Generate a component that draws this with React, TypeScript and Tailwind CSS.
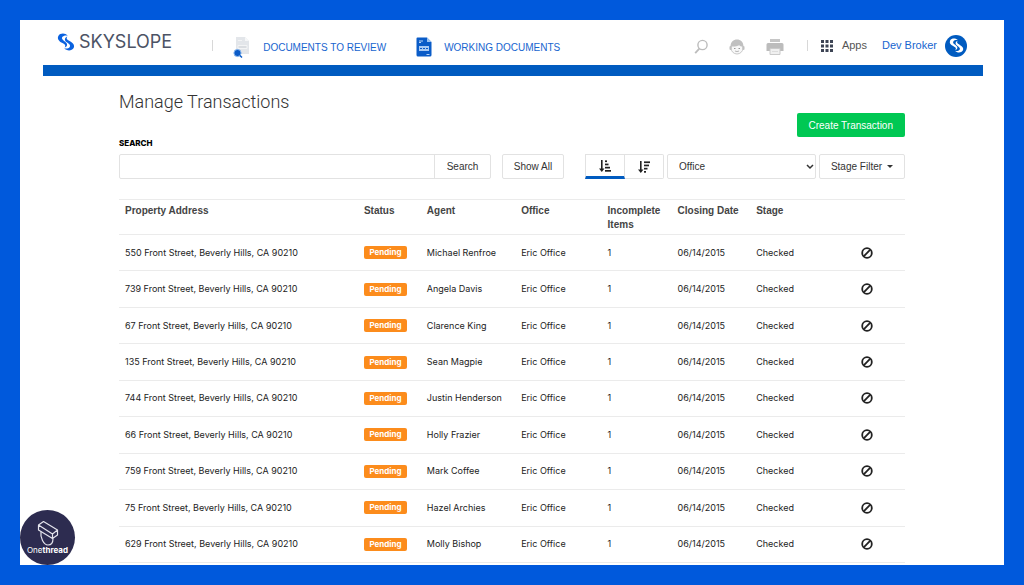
import React from 'react';

interface Transaction {
  address: string;
  agent: string;
}

const transactions: Transaction[] = [
  { address: '550 Front Street, Beverly Hills, CA 90210', agent: 'Michael Renfroe' },
  { address: '739 Front Street, Beverly Hills, CA 90210', agent: 'Angela Davis' },
  { address: '67 Front Street, Beverly Hills, CA 90210', agent: 'Clarence King' },
  { address: '135 Front Street, Beverly Hills, CA 90210', agent: 'Sean Magpie' },
  { address: '744 Front Street, Beverly Hills, CA 90210', agent: 'Justin Henderson' },
  { address: '66 Front Street, Beverly Hills, CA 90210', agent: 'Holly Frazier' },
  { address: '759 Front Street, Beverly Hills, CA 90210', agent: 'Mark Coffee' },
  { address: '75 Front Street, Beverly Hills, CA 90210', agent: 'Hazel Archies' },
  { address: '629 Front Street, Beverly Hills, CA 90210', agent: 'Molly Bishop' },
];

const Swoosh: React.FC<{ className?: string }> = ({ className }) => {
  const half =
    'M12 3C9-.3 3.500 0 1.500 3.200 0 6.200 2 8.800 5.500 10.800 8.500 12.500 10.300 13.500 8.500 16.200 12 14.500 12 11.800 9 9.600 6.500 7.800 4.600 6.400 5.800 4.500 7 2.800 9.800 2.400 12 3Z';
  return (
    <svg viewBox="0 0 20 20" fill="currentColor" className={className} aria-hidden="true">
      <path d={half} />
      <path d={half} transform="rotate(180 10 10)" />
    </svg>
  );
};

const ReviewIcon = () => (
  <svg width="18" height="22" viewBox="0 0 18 22" aria-hidden="true">
    <path d="M3 1h9l4 4v13H3z" fill="#e3e6ea" />
    <path d="M12 1v4h4z" fill="#f6f7f8" />
    <path d="M5 4.500h4M5 9.500h9v3H5z" stroke="#f3f4f5" strokeWidth="1" fill="#dadde1" />
    <circle cx="4.500" cy="17" r="3.600" fill="#0a5bc7" stroke="#8bb8ee" strokeWidth="1" />
    <path d="M7 19.500l2 2" stroke="#0a5bc7" strokeWidth="1.500" />
  </svg>
);

const WorkingIcon = () => (
  <svg width="16" height="20" viewBox="0 0 16 20" aria-hidden="true">
    <path d="M1.500.500H11L15.500 5v13a1.500 1.500 0 0 1-1.500 1.500H2A1.500 1.500 0 0 1 .5 18V1.500a1 1 0 0 1 1-1z" fill="#0a5cc8" />
    <path d="M11 .5V5h4.500z" fill="#9cc3f2" />
    <path d="M3 4h4M3 5.500h2M10.500 17.500h3" stroke="#b9d5f6" strokeWidth="1" />
    <rect x="3" y="9" width="10" height="5" fill="#a9caf3" />
    <path d="M4 11.500h8" stroke="#0a5cc8" strokeWidth="1" strokeDasharray="2 1" />
  </svg>
);

const SearchIcon = () => (
  <svg width="14" height="16" viewBox="0 0 14 16" fill="none" stroke="#bcbcbc" aria-hidden="true">
    <circle cx="8.500" cy="6" r="4.600" strokeWidth="1.400" />
    <path d="M5.300 9.600 1.200 14.200" strokeWidth="1.800" />
  </svg>
);

const SupportIcon = () => (
  <svg width="16" height="16" viewBox="0 0 16 16" aria-hidden="true">
    <circle cx="8" cy="9" r="6" fill="#f7f7f7" stroke="#c9c9c9" strokeWidth="1" />
    <path d="M1.500 7.500C1.500 3 4.500.500 8 .500s6.500 2.500 6.500 7c-2 .2-3.500-.3-4.300-1.200C8 7.600 4.500 7.800 1.500 7.500z" fill="#c0c0c0" />
    <rect x=".5" y="7" width="2" height="4" rx="1" fill="#c0c0c0" />
    <rect x="13.500" y="7" width="2" height="4" rx="1" fill="#c0c0c0" />
    <path d="M5 9.500h1.500M9.500 9.500h1.500" stroke="#999" strokeWidth="1" />
    <path d="M6 12q2 1.200 4 0" stroke="#b8b8b8" strokeWidth="1" fill="none" />
  </svg>
);

const PrinterIcon = () => (
  <svg width="18" height="16" viewBox="0 0 18 16" aria-hidden="true">
    <path d="M4 0h10v3H4z" fill="#c6c6c6" />
    <path d="M2 4h14a1.500 1.500 0 0 1 1.500 1.500V12H.500V5.500A1.500 1.500 0 0 1 2 4z" fill="#bcbcbc" />
    <path d="M4 9.500h10v6H4z" fill="#f0f0f0" stroke="#cacaca" strokeWidth="1" />
    <path d="M6 12.500h6" stroke="#dcdcdc" strokeWidth="1" />
  </svg>
);

const GridIcon = () => (
  <svg width="12" height="12" viewBox="0 0 12 12" fill="#3d4454" aria-hidden="true">
    {[0, 4.5, 9].map((y) => [0, 4.5, 9].map((x) => <rect key={`${x}-${y}`} x={x} y={y} width="3" height="3" />))}
  </svg>
);

const SortIcon: React.FC<{ bars: number[] }> = ({ bars }) => (
  <svg width="12" height="12" viewBox="0 0 12 12" fill="#222" aria-hidden="true">
    <path d="M2 0h1.600v8.500H5.500L2.800 12 0 8.500h2z" />
    {bars.map((width, i) => (
      <rect key={i} x="6" y={i * 3.2 + 0.4} width={width} height="1.700" />
    ))}
  </svg>
);

const BanIcon = () => (
  <svg width="12" height="12" viewBox="0 0 12 12" fill="none" stroke="#222" strokeWidth="1.800" aria-hidden="true">
    <circle cx="6" cy="6" r="4.800" />
    <path d="M2.700 9.300 9.300 2.700" />
  </svg>
);

const OnethreadBadge = () => (
  <div className="absolute bottom-5 left-5 flex h-[55px] w-[55px] flex-col items-center rounded-full bg-[#2d2c50] pt-[10px] text-white">
    <svg width="24" height="26" viewBox="0 0 24 26" fill="none" stroke="#e4e4ec" strokeWidth="1.200" strokeLinejoin="round" aria-hidden="true">
      <path d="M2.500 5 7.500 1.500l14 8.500-5 4zM2.500 5v5l14 8.500V14M21.500 10v5l-5 3.500" />
      <path d="M5 11.500c-.5 3 0 6 1.500 9 1.500 3 3.500 4.500 5.500 4.500 3 0 5-2.500 5-6.500" />
    </svg>
    <span className="font-[Inter,sans-serif] text-[8px] leading-[8px]">
      One<b>thread</b>
    </span>
  </div>
);

const Header = () => (
  <header className="mr-[21px] ml-[23px] flex h-[56px] items-center border-b-[11px] border-[#005bc0] pt-[6px] text-[11px]">
    <a href="#" className="flex items-center gap-1 pb-[7px] pl-[14px] text-[#4c5365]">
      <Swoosh className="h-[20px] w-[18px] text-[#0a62e0]" />
      <span className="font-[Inter,sans-serif] text-[18px] leading-5">SKYSLOPE</span>
    </a>
    <span className="ml-[40px] h-[11px] w-px bg-[#d8d8d8]" />
    <nav className="flex flex-1 items-center gap-[30px] pt-[3px] pl-[20px] text-[10px] whitespace-nowrap text-[#1765cf]">
      <a href="#" className="flex items-center gap-[12px]">
        <ReviewIcon />
        DOCUMENTS TO REVIEW
      </a>
      <a href="#" className="flex items-center gap-[12px]">
        <WorkingIcon />
        WORKING DOCUMENTS
      </a>
    </nav>
    <div className="flex items-center gap-[21px] pt-[3px]">
      <button aria-label="Search"><SearchIcon /></button>
      <button aria-label="Support"><SupportIcon /></button>
      <button aria-label="Print"><PrinterIcon /></button>
    </div>
    <span className="ml-[23px] h-[11px] w-px bg-[#d8d8d8]" />
    <button className="ml-[13px] flex items-center gap-[9px] text-[#555]">
      <GridIcon />
      Apps
    </button>
    <a href="#" className="ml-[15px] flex items-center gap-[8px] pr-[16px] text-[#1765cf]">
      Dev Broker
      <span className="flex h-[22px] w-[22px] items-center justify-center rounded-full bg-[#005bc0] text-white">
        <Swoosh className="h-[17px] w-[15px]" />
      </span>
    </a>
  </header>
);

const Toolbar = () => (
  <div>
    <label htmlFor="search" className="block font-[Inter,sans-serif] text-[8px] leading-[12px] font-extrabold text-black">
      SEARCH
    </label>
    <div className="mt-[5px] flex h-[25px] text-[10px] text-[#333]">
      <div className="flex flex-1 rounded-[2px] border border-[#e2e2e2]">
        <input id="search" type="text" className="min-w-0 flex-1 px-2 outline-none" />
        <button className="w-[56px] border-l border-[#e2e2e2]">Search</button>
      </div>
      <button className="ml-[11px] w-[62px] rounded-[2px] border border-[#e2e2e2]">Show All</button>
      <div className="ml-[21px] flex w-[79px]">
        <button aria-label="Sort ascending" className="flex flex-1 items-center justify-center border border-b-3 border-[#e2e2e2] border-b-[#005bc0]">
          <SortIcon bars={[2, 3.5, 5, 6]} />
        </button>
        <button aria-label="Sort descending" className="flex flex-1 items-center justify-center rounded-r-[2px] border border-l-0 border-[#e2e2e2]">
          <SortIcon bars={[6, 5, 3.5, 2]} />
        </button>
      </div>
      <div className="relative ml-[3px] w-[149px]">
        <select aria-label="Filter by" className="h-full w-full appearance-none rounded-[2px] border border-[#e2e2e2] bg-white px-[11px]">
          <option>Office</option>
        </select>
        <svg width="8" height="6" viewBox="0 0 8 6" fill="none" stroke="#333" strokeWidth="1.500" className="pointer-events-none absolute top-[10px] right-[2px]" aria-hidden="true">
          <path d="M1 1l3 3 3-3" />
        </svg>
      </div>
      <button className="ml-[3px] flex w-[86px] items-center justify-center gap-[5px] rounded-[2px] border border-[#e2e2e2]">
        Stage Filter
        <svg width="6" height="3" viewBox="0 0 6 3" fill="#333" aria-hidden="true">
          <path d="M0 0h6L3 3z" />
        </svg>
      </button>
    </div>
  </div>
);

const TransactionTable = () => (
  <div className="mt-[20px] flex flex-1">
    <table className="w-full table-fixed border-collapse text-left text-[#222]">
      <thead className="text-[10px] leading-[14px] text-[#444]">
        <tr className="h-[35px] border-y border-[#ebebeb] align-top [&>th]:pt-[4px] [&>th]:pl-[6px]">
          <th className="w-[30.4%]">Property Address</th>
          <th className="w-[8%]">Status</th>
          <th className="w-[12%]">Agent</th>
          <th className="w-[11%]">Office</th>
          <th className="w-[8.9%]">Incomplete Items</th>
          <th className="w-[10%]">Closing Date</th>
          <th className="w-[10%]">Stage</th>
          <th aria-label="Actions" />
        </tr>
      </thead>
      <tbody className="font-[Inter,sans-serif] text-[9px] leading-[14px]">
        {transactions.map((t) => (
          <tr key={t.address} className="border-b border-[#ebebeb] [&>td:not(:last-child)]:pl-[6px]">
            <td>{t.address}</td>
            <td>
              <span className="block w-[43px] rounded-[2px] bg-[#fc8c1c] text-center text-[8px] leading-[13px] font-bold text-white">
                Pending
              </span>
            </td>
            <td>{t.agent}</td>
            <td>Eric Office</td>
            <td>1</td>
            <td>06/14/2015</td>
            <td>Checked</td>
            <td>
              <button aria-label="Cancel transaction" className="mx-auto block">
                <BanIcon />
              </button>
            </td>
          </tr>
        ))}
      </tbody>
    </table>
  </div>
);

const App: React.FC = () => {
  return (
    <div className="relative flex min-h-screen flex-col bg-[#0059dc] p-5 font-['Liberation_Sans',Arial,sans-serif]">
      <div className="flex flex-1 flex-col bg-white">
        <Header />
        <main className="mx-[99px] flex flex-1 flex-col pt-[14px] pb-[2px]">
          <div className="flex items-start justify-between">
            <h1 className="font-[Roboto,sans-serif] text-[18px] leading-6 font-light text-[#333]">Manage Transactions</h1>
            <button className="mt-[23px] h-6 rounded-[2px] bg-[#00c853] px-3 text-[10px] text-white">Create Transaction</button>
          </div>
          <Toolbar />
          <TransactionTable />
        </main>
      </div>
      <OnethreadBadge />
    </div>
  );
};

export default App;
